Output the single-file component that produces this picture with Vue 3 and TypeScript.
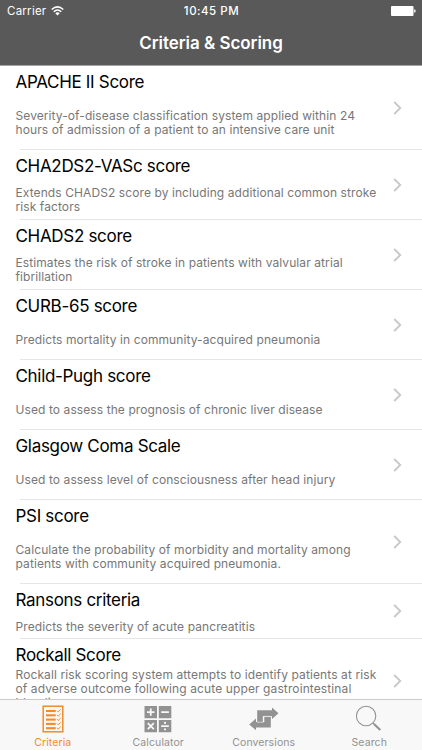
<script setup lang="ts">
interface Criterion {
  title: string
  lines: string[]
  size: string
}

const criteria: Criterion[] = [
  { title: 'APACHE II Score', lines: ['Severity-of-disease classification system applied within 24', 'hours of admission of a patient to an intensive care unit'], size: 'tall' },
  { title: 'CHA2DS2-VASc score', lines: ['Extends CHADS2 score by including additional common stroke', 'risk factors'], size: 'medium' },
  { title: 'CHADS2 score', lines: ['Estimates the risk of stroke in patients with valvular atrial', 'fibrillation'], size: 'medium' },
  { title: 'CURB-65 score', lines: ['Predicts mortality in community-acquired pneumonia'], size: 'medium' },
  { title: 'Child-Pugh score', lines: ['Used to assess the prognosis of chronic liver disease'], size: 'medium' },
  { title: 'Glasgow Coma Scale', lines: ['Used to assess level of consciousness after head injury'], size: 'medium' },
  { title: 'PSI score', lines: ['Calculate the probability of morbidity and mortality among', 'patients with community acquired pneumonia.'], size: 'tall' },
  { title: 'Ransons criteria', lines: ['Predicts the severity of acute pancreatitis'], size: 'short' },
  { title: 'Rockall Score', lines: ['Rockall risk scoring system attempts to identify patients at risk', 'of adverse outcome following acute upper gastrointestinal', 'bleeding'], size: 'long' },
]
const checkRows = [6, 10.3, 14.6, 18.9, 23.2]
</script>

<template>
  <div class="screen">
    <header class="header">
      <div class="status">
        <div class="carrier">
          <span>Carrier</span>
          <svg width="13" height="10" viewBox="0 0 13 10" fill="none" stroke="#fff" stroke-width="1.5">
            <path d="M.7 3.5Q6.5-1.7 12.3 3.5M2.7 5.7Q6.5 2.2 10.3 5.7" />
            <path d="M4.3 7.2Q6.5 5.4 8.7 7.2L6.5 9.4Z" fill="#fff" stroke="none" />
          </svg>
        </div>
        <span class="time">10:45 PM</span>
        <svg class="battery" width="26" height="10" viewBox="0 0 26 10" fill="#fff">
          <rect width="22.5" height="10" rx="1" /><path d="M23.2 3.2Q24.7 3.4 24.7 5T23.2 6.8Z" />
        </svg>
      </div>
      <h1>Criteria &amp; Scoring</h1>
    </header>

    <main class="list">
      <article v-for="item in criteria" :key="item.title" class="row" :class="item.size">
        <div class="body">
          <h2>{{ item.title }}</h2>
          <p><span v-for="line in item.lines" :key="line">{{ line }}</span></p>
        </div>
        <svg class="chevron" width="9" height="14" viewBox="0 0 9 14" fill="none" stroke="#c7c7cc" stroke-width="1.8">
          <path d="M1.2 1L7.3 7L1.2 13" />
        </svg>
      </article>
    </main>

    <nav class="tabs">
      <div class="tab active">
        <svg width="30" height="28" viewBox="0 0 30 28" fill="none" stroke="currentColor">
          <rect x="5.2" y="1.2" width="19.6" height="25.6" stroke-width="1.5" />
          <g v-for="y in checkRows" :key="y">
            <path :d="`M8 ${y}H17.7`" stroke-width="2.1" />
            <path :d="`M19 ${y - .4}L20.2 ${y + .9}L22.7 ${y - 1.5}`" stroke-width="1" />
          </g>
        </svg>
        <span>Criteria</span>
      </div>
      <div class="tab">
        <svg width="30" height="28" viewBox="0 0 30 28" fill="currentColor">
          <path d="M1.5 1H14V13.2H1.5ZM15.8 1H28.3V13.2H15.8ZM1.5 15H14V27.2H1.5ZM15.8 15H28.3V27.2H15.8Z" />
          <path d="M4 7.1H11.5M7.75 3.4V10.8M18.2 7.1H25.9M4.8 18.1L10.8 24.1M10.8 18.1L4.8 24.1M18.2 21.1H25.9" fill="none" stroke="#f8f8f8" stroke-width="1.8" />
          <circle cx="22" cy="17.9" r="1.1" fill="#f8f8f8" /><circle cx="22" cy="24.3" r="1.1" fill="#f8f8f8" />
        </svg>
        <span>Calculator</span>
      </div>
      <div class="tab">
        <svg width="30" height="28" viewBox="0 0 30 28" fill="currentColor">
          <path d="M8.2 5.2H23V2.4L29.5 8.2L23 14V11.2H13.8V17H8.2Z" />
          <path d="M21.8 22.4H7V25.2L.2 19.4L7 13.6V17H15.3V11.7H21.8Z" />
          <path d="M8 17.2H14.5V11.4H22" fill="none" stroke="#f8f8f8" stroke-width=".6" />
        </svg>
        <span>Conversions</span>
      </div>
      <div class="tab">
        <svg width="30" height="28" viewBox="0 0 30 28" fill="none" stroke="currentColor">
          <circle cx="12.1" cy="11" r="9.7" stroke-width="1.1" />
          <path d="M18.8 17.8L20.4 19.4" stroke-width="1.1" /><path d="M20 19L26.3 25" stroke-width="2.1" />
        </svg>
        <span>Search</span>
      </div>
    </nav>
  </div>
</template>

<style>
body { margin: 0; overflow: hidden; }
</style>

<style scoped>
.screen { display: flex; flex-direction: column; width: 422px; height: 750px; overflow: hidden; background: #fff; font-family: Inter, "Liberation Sans", sans-serif; }
.header { flex: none; box-sizing: border-box; height: 66px; background: #595959; border-bottom: 1px solid #a4a4a4; color: #fff; }
.status { display: grid; grid-template-columns: 1fr auto 1fr; align-items: center; height: 22px; padding: 0 6px 0 7px; font-size: 11.5px; }
.carrier { display: flex; align-items: center; gap: 5px; letter-spacing: .25px; }
.time { font-weight: 500; letter-spacing: .5px; }
.battery { justify-self: end; margin-right: -1px; }
h1 { margin: 0; text-align: center; font-size: 17px; line-height: 43px; font-weight: 600; letter-spacing: -.05px; }
.list { flex: 1; min-height: 0; overflow: hidden; }
.row { display: flex; align-items: center; box-sizing: border-box; height: 69.9px; padding: 0 20px 0 15.5px; background: linear-gradient(#e6e6e8, #e6e6e8) 20px 100% / 402px 1px no-repeat; }
.tall { height: 84.2px; }
.short { height: 55.3px; }
.long { height: 84.3px; }
.body { display: flex; flex: 1; flex-direction: column; min-width: 0; height: 100%; }
h2 { flex: none; height: 30px; margin: 0; color: #000; font-size: 17px; line-height: 32px; font-weight: 400; letter-spacing: -.31px; white-space: nowrap; }
p { display: flex; flex: 1; flex-direction: column; justify-content: center; margin: 0; padding-top: .5px; color: #777; font-size: 12px; line-height: 14.3px; letter-spacing: .09px; white-space: nowrap; }
.long p { justify-content: flex-start; margin-top: -1.3px; line-height: 14px; letter-spacing: .11px; }
.chevron { flex: none; }
.tabs { display: grid; flex: none; grid-template-columns: repeat(4, 1fr); box-sizing: border-box; height: 51px; border-top: 1px solid #cbcbcb; background: #f8f8f8; color: #929292; }
.tab { display: flex; flex-direction: column; align-items: center; padding-top: 5px; font-size: 10.5px; line-height: 20px; letter-spacing: .1px; }
.active { color: #f38b28; }
</style>
